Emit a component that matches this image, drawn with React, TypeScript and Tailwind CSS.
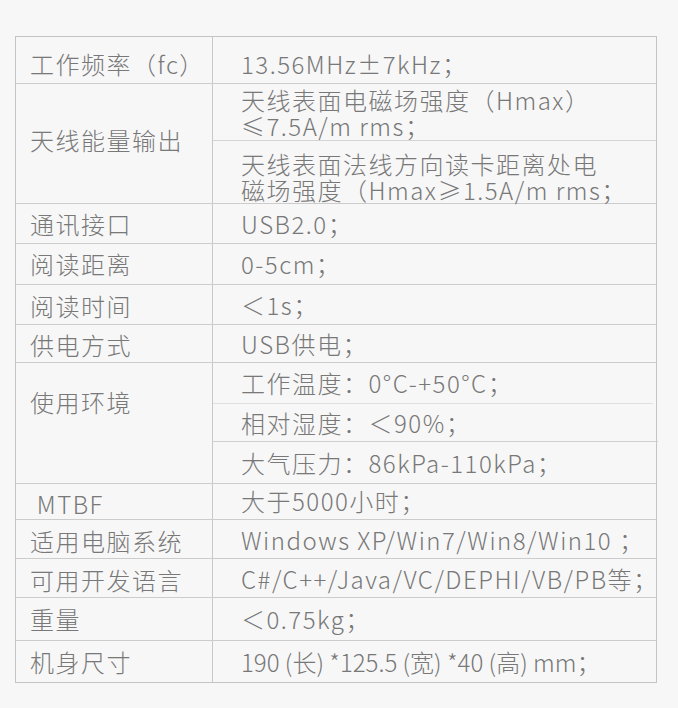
const font = {
  fontFamily: '"Noto Sans CJK SC", "Noto Sans", sans-serif',
};

type Row = {
  label: string;
  h: number;
  labelClass?: string;
  values: { text: string[]; h: number; className?: string; line?: string }[];
};

const rows: Row[] = [
  { label: '工作频率（fc）', h: 47, labelClass: 'pt-[8px]', values: [{ text: ['13.56MHz±7kHz；'], h: 47, className: 'pt-[8px]' }] },
  {
    label: '天线能量输出',
    h: 120,
    labelClass: 'pb-[8px]',
    values: [
      { text: ['天线表面电磁场强度（Hmax）', '≤7.5A/m rms；'], h: 57, className: 'pt-[1px]' },
      { text: ['天线表面法线方向读卡距离处电', '磁场强度（Hmax≥1.5A/m rms；'], h: 63, className: 'pt-[9px]', line: 'border-[#d4d4d4]' },
    ],
  },
  { label: '通讯接口', h: 40, values: [{ text: ['USB2.0；'], h: 40 }] },
  { label: '阅读距离', h: 41, values: [{ text: ['0-5cm；'], h: 41 }] },
  { label: '阅读时间', h: 40, labelClass: 'pt-[2px]', values: [{ text: ['＜1s；'], h: 40 }] },
  { label: '供电方式', h: 38, labelClass: 'pt-[2px]', values: [{ text: ['USB供电；'], h: 38 }] },
  {
    label: '使用环境',
    h: 121,
    labelClass: 'pb-[42px]',
    values: [
      { text: ['工作温度：0°C-+50°C；'], h: 41 },
      { text: ['相对湿度：＜90%；'], h: 38, line: 'border-[#e0e0e0] mr-[3px]' },
      { text: ['大气压力：86kPa-110kPa；'], h: 42, line: 'border-[#cfcfcf] -mr-[2px]' },
    ],
  },
  { label: ' MTBF', h: 36, labelClass: 'pt-[4px] pl-[8px]', values: [{ text: ['大于5000小时；'], h: 36, className: 'pb-[2px]' }] },
  { label: '适用电脑系统', h: 39, labelClass: 'pt-[4px]', values: [{ text: ['Windows XP/Win7/Win8/Win10 ；'], h: 39, className: 'pt-[2px]' }] },
  { label: '可用开发语言', h: 39, labelClass: 'pt-[4px]', values: [{ text: ['C#/C++/Java/VC/DEPHI/VB/PB等；'], h: 39, className: 'pt-[2px]' }] },
  { label: '重量', h: 43, values: [{ text: ['＜0.75kg；'], h: 43 }] },
  { label: '机身尺寸', h: 42, values: [{ text: ['190 (长) *125.5 (宽) *40 (高) mm；'], h: 42, className: 'tracking-[0px]' }] },
];

export default function App() {
  return (
    <div className="w-[678px] h-[708px] bg-[#f7f7f7] pt-[36px] pl-[15px]" style={font}>
      <div className="w-[642px] border border-[#c4c4c4] text-[#787878] font-light text-[24px] tracking-[1.5px]">
        {rows.map((row, i) => (
          <div
            key={row.label}
            className={`flex ${i > 0 ? 'border-t border-[#cccccc]' : ''}`}
            style={{ height: row.h - (i > 0 ? 0 : 1) }}
          >
            <div className={`w-[197px] shrink-0 border-r border-[#c8c8c8] flex items-center pl-[14px] whitespace-pre ${row.labelClass ?? ''}`}>
              {row.label}
            </div>
            <div className="flex-1 flex flex-col">
              {row.values.map((v, j) => (
                <div
                  key={j}
                  className={`flex flex-col justify-center pl-[28px] leading-[26px] ${j > 0 ? `border-t ${v.line ?? 'border-[#cccccc]'}` : ''} ${v.className ?? ''}`}
                  style={{ height: v.h - (j > 0 ? 0 : 1) }}
                >
                  {v.text.map((t) => (
                    <span key={t} className="whitespace-nowrap">{t}</span>
                  ))}
                </div>
              ))}
            </div>
          </div>
        ))}
      </div>
    </div>
  );
}
